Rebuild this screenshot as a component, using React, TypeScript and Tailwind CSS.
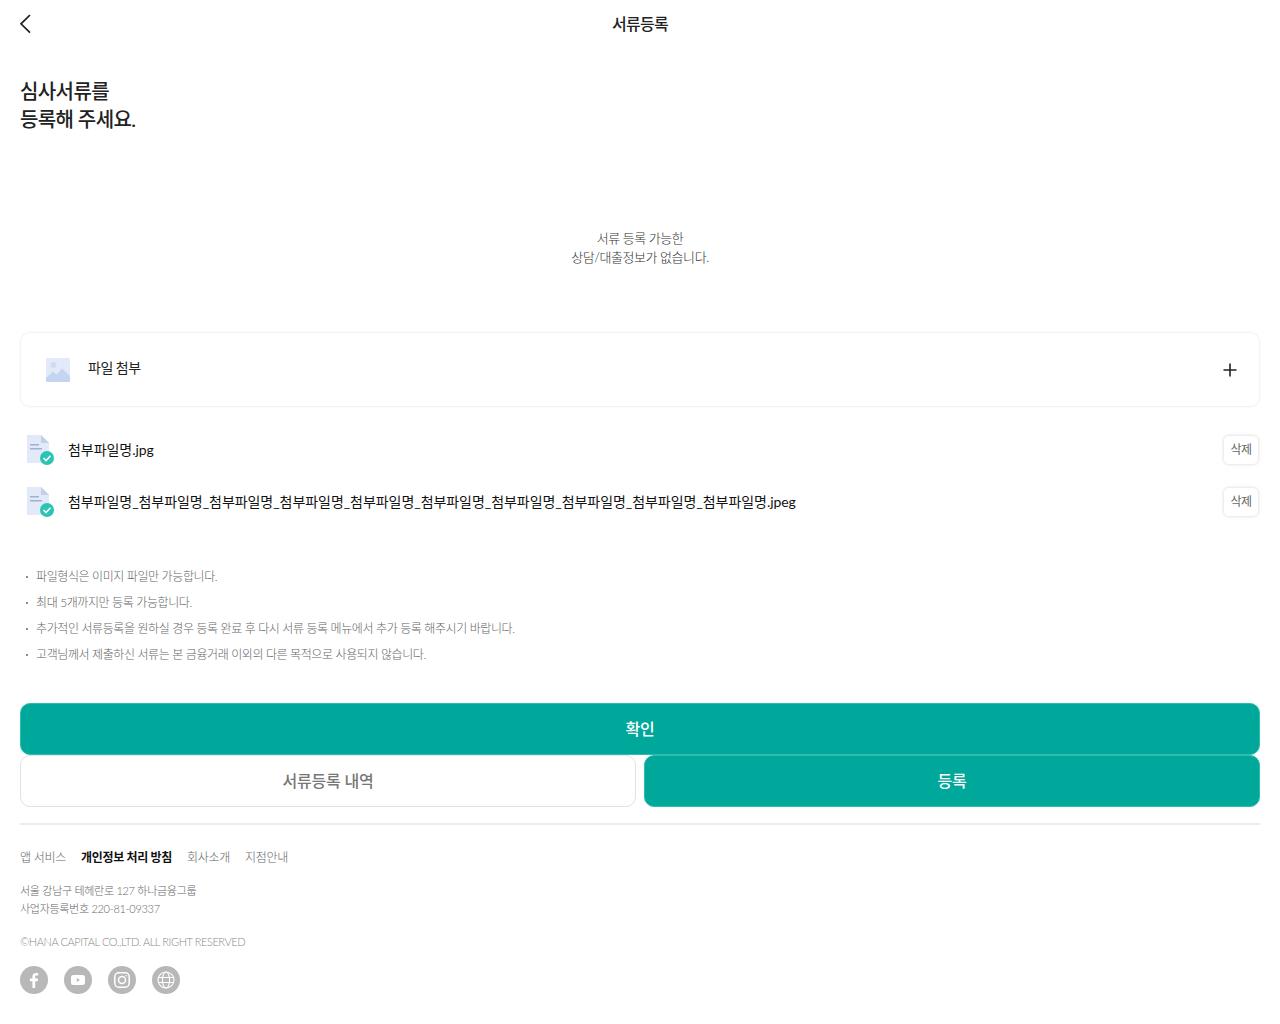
const FONT = "font-['Lato','Noto_Sans_CJK_KR',sans-serif]";

const NOTES = [
  '파일형식은 이미지 파일만 가능합니다.',
  '최대 5개까지만 등록 가능합니다.',
  '추가적인 서류등록을 원하실 경우 등록 완료 후 다시 서류 등록 메뉴에서 추가 등록 해주시기 바랍니다.',
  '고객님께서 제출하신 서류는 본 금융거래 이외의 다른 목적으로 사용되지 않습니다.'
];

const LONG_NAME = '첨부파일명_첨부파일명_첨부파일명_첨부파일명_첨부파일명_첨부파일명_첨부파일명_첨부파일명_첨부파일명_첨부파일명.jpeg';

function ImageIcon() {
  return (
    <svg width="24" height="24" viewBox="0 0 24 24">
      <rect width="24" height="24" rx="1.5" fill="#e2eafa" />
      <circle cx="7.5" cy="7" r="3" fill="#d0dcf5" />
      <path d="M0 20 L7 13.5 L10.5 16.5 L16 10.5 L24 18 V22.5 A1.5 1.5 0 0 1 22.5 24 H1.5 A1.5 1.5 0 0 1 0 22.5 Z" fill="#c5d4f1" />
    </svg>
  );
}

function FileIcon() {
  return (
    <svg width="28" height="30" viewBox="0 0 28 30">
      <path d="M1 0 H15 L23 8 V28 H1 Z" fill="#e2eafa" />
      <path d="M15 0 L23 8 H15 Z" fill="#c3cfe8" />
      <rect x="4" y="9" width="9" height="1.5" fill="#9fb0d0" />
      <rect x="4" y="13" width="12" height="1.5" fill="#9fb0d0" />
      <circle cx="21" cy="23" r="7" fill="#2bc4b4" />
      <path d="M17.5 23 L20 25.5 L24.5 20.8" fill="none" stroke="#fff" strokeWidth="1.6" />
    </svg>
  );
}

function FileRow({ name }: { name: string }) {
  return (
    <div className="flex h-[30px] items-center justify-between">
      <div className="flex items-center">
        <div className="ml-[6px] mr-[14px] flex">
          <FileIcon />
        </div>
        <span className="pb-[2px] text-[14px] tracking-[-0.05px] text-[#111]">{name}</span>
      </div>
      <button className="mr-px flex h-[30px] w-[36px] items-center justify-center rounded-[6px] border border-[#eeeeee] text-[12px] tracking-[-0.5px] text-[#666] shadow-[0_0_3px_rgba(0,0,0,0.1)]">
        삭제
      </button>
    </div>
  );
}

function SocialIcon({ children }: { children: React.ReactNode }) {
  return (
    <span className="flex h-7 w-7 items-center justify-center rounded-full bg-[#b8b8b8]">
      <svg width="20" height="20" viewBox="0 0 20 20">{children}</svg>
    </span>
  );
}

export default function App() {
  return (
    <div className={`${FONT} min-h-[1024px] bg-white px-5`}>
      <header className="relative flex h-12 items-center justify-center">
        <svg className="absolute left-0 top-[14px]" width="11" height="20" viewBox="0 0 11 20">
          <path d="M10 1 L1 9.8 L10 18.6" fill="none" stroke="#222" strokeWidth="1.7" />
        </svg>
        <h1 className="text-[16px] font-medium tracking-[-0.7px] text-[#222]">서류등록</h1>
      </header>

      <h2 className="mt-[29px] text-[20px] font-medium leading-[28px] tracking-[-0.6px] text-[#222]">
        심사서류를
        <br />
        등록해 주세요.
      </h2>

      <p className="mt-[96px] text-center text-[13px] font-light leading-[19px] tracking-[-0.45px] text-[#333]">
        서류 등록 가능한
        <br />
        상담/대출정보가 없습니다.
      </p>

      <div className="mt-[65px] flex h-[75px] items-center justify-between rounded-[10px] border border-[#f3f3f3] pl-[25px] pr-[21px] shadow-[0_0_3px_rgba(0,0,0,0.05)]">
        <div className="flex items-center gap-[18px]">
          <ImageIcon />
          <span className="pb-[4px] text-[14px] tracking-[-0.5px] text-[#222]">파일 첨부</span>
        </div>
        <svg width="16" height="16" viewBox="0 0 16 16">
          <path d="M8 1.5 V14.5 M1.5 8 H14.5" stroke="#222" strokeWidth="1.6" />
        </svg>
      </div>

      <div className="mt-[28px] flex flex-col gap-[22px]">
        <FileRow name="첨부파일명.jpg" />
        <FileRow name={LONG_NAME} />
      </div>

      <ul className="mt-[47px] flex flex-col">
        {NOTES.map((note) => (
          <li key={note} className="flex h-[26px] items-center text-[12px] font-light tracking-[-0.4px] text-[#666]">
            <span className="ml-[6px] mr-[8px] h-[2px] w-[2px] rounded-full bg-[#666]" />
            {note}
          </li>
        ))}
      </ul>

      <div className="mt-[35px] flex flex-col">
        <button className="h-[52px] rounded-[10px] border border-[#2fbcb0] bg-[#00a79b] text-[16px] font-medium tracking-[-0.2px] text-white">
          확인
        </button>
        <div className="grid grid-cols-2 gap-2">
          <button className="h-[52px] rounded-[10px] border border-[#e2e2e2] bg-white text-[16px] font-medium tracking-[-0.2px] text-[#777]">
            서류등록 내역
          </button>
          <button className="h-[52px] rounded-[10px] border border-[#2fbcb0] bg-[#00a79b] text-[16px] font-medium tracking-[-0.2px] text-white">
            등록
          </button>
        </div>
      </div>

      <footer className="mt-4 border-t-2 border-[#ececec] pt-[25px]">
        <nav className="flex h-[16px] items-center gap-[15px] text-[12px] font-light tracking-[-0.3px] text-[#666]">
          <span>앱 서비스</span>
          <span className="font-bold text-[#111]">개인정보 처리 방침</span>
          <span>회사소개</span>
          <span>지점안내</span>
        </nav>
        <p className="mt-[16px] text-[11px] font-light leading-[18px] tracking-[-0.3px] text-[#666]">
          서울 강남구 테헤란로 127 하나금융그룹
          <br />
          사업자등록번호 220-81-09337
        </p>
        <p className="mt-[15px] text-[11px] font-light leading-[18px] tracking-[-0.42px] text-[#888]">
          ©HANA CAPITAL CO.,LTD. ALL RIGHT RESERVED
        </p>
        <div className="mt-[15px] flex gap-4">
          <SocialIcon>
            <path d="M11.2 18 V11.2 H13.7 L14.1 8.4 H11.2 V6.9 C11.2 6.1 11.5 5.5 12.6 5.5 H14.2 V3 C13.9 3 13 2.9 12.1 2.9 C9.9 2.9 8.4 4.2 8.4 6.6 V8.4 H5.9 V11.2 H8.4 V18 Z" fill="#fff" />
          </SocialIcon>
          <SocialIcon>
            <rect x="3" y="5" width="14" height="10" rx="2.5" fill="#fff" />
            <path d="M8.8 8 L12 10 L8.8 12 Z" fill="#b8b8b8" />
          </SocialIcon>
          <SocialIcon>
            <rect x="2.8" y="2.8" width="14.4" height="14.4" rx="4" fill="none" stroke="#fff" strokeWidth="1.5" />
            <circle cx="10" cy="10" r="3.5" fill="none" stroke="#fff" strokeWidth="1.5" />
            <circle cx="14.2" cy="5.8" r="0.8" fill="#fff" />
          </SocialIcon>
          <SocialIcon>
            <g fill="none" stroke="#fff" strokeWidth="1.1">
              <circle cx="10" cy="10" r="8" />
              <ellipse cx="10" cy="10" rx="3.6" ry="8" />
              <path d="M2.5 7.5 H17.5 M2.5 12.5 H17.5" />
            </g>
          </SocialIcon>
        </div>
      </footer>
    </div>
  );
}
